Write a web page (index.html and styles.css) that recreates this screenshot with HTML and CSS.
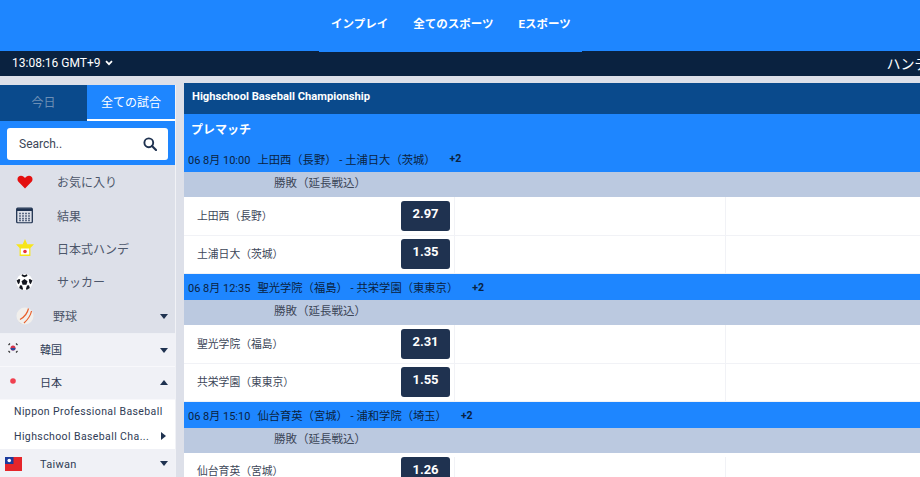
FILE: index.html
```html
<!DOCTYPE html>
<html lang="ja">
<head>
    <meta charset="UTF-8">
    <title>Highschool Baseball Championship</title>
    <link rel="stylesheet" href="styles.css">
</head>
<body>
    <nav class="top-nav">
        <div class="top-nav-links">
            <a>インプレイ</a>
            <a>全てのスポーツ</a>
            <a>Eスポーツ</a>
        </div>
    </nav>
    <div class="time-bar">
        <span class="clock">13:08:16 GMT+9</span>
        <svg class="clock-arrow" width="8" height="6" viewBox="0 0 8 6"><path d="M1 1.2l3 3 3-3" fill="none" stroke="#fff" stroke-width="1.7"/></svg>
        <span class="ticker">ハンデ</span>
    </div>

    <div class="layout">
        <aside class="sidebar">
            <div class="side-top">
                <div class="tabs">
                    <div class="tab">今日</div>
                    <div class="tab active">全ての試合</div>
                </div>
                <div class="search">
                    <span>Search..</span>
                    <svg width="14" height="14" viewBox="0 0 14 14"><circle cx="5.8" cy="5.8" r="4.4" fill="none" stroke="#1f3250" stroke-width="1.9"/><path d="M9 9l4 4" stroke="#1f3250" stroke-width="2.2" stroke-linecap="round"/></svg>
                </div>
            </div>

            <div class="menu-item">
                <svg class="menu-icon heart" width="16" height="14" viewBox="0 0 16 14"><path d="M8 13.5L1.2 6.6C-.6 3.6 1.2.7 4 .7c1.800 0 3.200 1 4 2.400C8.800 1.700 10.200.7 12 .7c2.800 0 4.600 2.900 2.800 5.900z" fill="#e41010"/></svg>
                <span>お気に入り</span>
            </div>
            <div class="menu-item">
                <svg class="menu-icon" width="17" height="17" viewBox="0 0 17 17"><rect x=".7" y="1.700" width="15.600" height="14.600" rx="1" fill="#dde0e9" stroke="#1f3250" stroke-width="1.300"/><path d="M1 2h15v2.500H1z" fill="#1f3250"/><path d="M3 7h11M3 9.500h11M3 12h11M3 14h11" stroke="#5d6b85" stroke-width="1.300" stroke-dasharray="2 1"/></svg>
                <span>結果</span>
            </div>
            <div class="menu-item">
                <svg class="menu-icon" width="18" height="18" viewBox="0 0 18 18"><path d="M9 0l2.300 5.300H18l-3.600 3.600V17H3.600V8.900L0 5.300h6.700z" fill="#f7e51a"/><rect x="4.800" y="9.500" width="8.400" height="6" fill="#fff"/><circle cx="9" cy="12.500" r="1.800" fill="#e8333f"/></svg>
                <span>日本式ハンデ</span>
            </div>
            <div class="menu-item">
                <svg class="menu-icon" width="17" height="17" viewBox="0 0 17 17"><circle cx="8.500" cy="8.500" r="8.200" fill="#fff"/><path d="M8.500 5.500l3 2.200-1.100 3.500H6.600L5.500 7.700zM6 .8l2.500 1 2.500-1 .4 1.700-2.900 1.200-2.900-1.200zM.6 7l2.400-1.600 1.200.7-.6 3.400-1.400 1.200zM16.400 7L14 5.400l-1.200.7.6 3.400 1.400 1.200zM3.200 14.500l.8-2.700 2 .2 1 3.300-.6 1.200zM13.800 14.500l-.8-2.700-2 .2-1 3.300.6 1.200z" fill="#14171f"/></svg>
                <span>サッカー</span>
            </div>
            <div class="menu-item sport">
                <svg class="menu-icon" width="18" height="18" viewBox="0 0 18 18"><circle cx="9" cy="9" r="8.500" fill="#f1efec"/><path d="M12.500 1.500C11.500 6 8.500 10 4 12.500M15.500 4C14.500 9 12 12.500 8 16" fill="none" stroke="#e8602c" stroke-width="1.200"/><path d="M1.500 13a8.500 8.500 0 0 0 7 4.500c-3-.5-5.500-2-7-4.500z" fill="#c9b89a"/></svg>
                <span>野球</span>
                <i class="caret down"></i>
            </div>

            <div class="country">
                <svg class="flag" width="10" height="10" viewBox="0 0 10 10"><circle cx="5" cy="5" r="2.500" fill="#d5324a"/><path d="M2.500 5a2.500 2.500 0 0 0 5 0z" fill="#2a4b9b"/><path d="M.5 2l1.500-1.500M8 .5L9.500 2M.5 8L2 9.500M8 9.500L9.500 8" stroke="#333" stroke-width="1.200"/></svg>
                <span>韓国</span>
                <i class="caret down"></i>
            </div>
            <div class="country">
                <svg class="flag" width="10" height="10" viewBox="0 0 10 10"><circle cx="5" cy="5" r="2.800" fill="#f0404f"/></svg>
                <span>日本</span>
                <i class="caret up"></i>
            </div>
            <div class="leagues">
                <div class="league">Nippon Professional Baseball</div>
                <div class="league">
                    <span>Highschool Baseball Cha...</span>
                    <i class="caret right"></i>
                </div>
            </div>
            <div class="country taiwan">
                <svg class="flag" width="17" height="14" viewBox="0 0 17 14"><rect width="17" height="14" fill="#e5252a"/><rect width="8.500" height="7" fill="#1b3a9c"/><circle cx="4.250" cy="3.500" r="1.800" fill="#fff"/></svg>
                <span>Taiwan</span>
                <i class="caret down"></i>
            </div>
        </aside>

        <main class="content">
            <div class="league-title">Highschool Baseball Championship</div>
            <div class="prematch">プレマッチ</div>

            <div class="match-head first">
                <span class="match-time">06 8月 10:00</span>
                <span class="match-name">上田西（長野） - 土浦日大（茨城）</span>
                <span class="more">+2</span>
            </div>
            <div class="market">勝敗（延長戦込）</div>
            <div class="row"><div class="team">上田西（長野）</div><div class="odds">2.97</div><div class="empty"></div></div>
            <div class="row"><div class="team">土浦日大（茨城）</div><div class="odds">1.35</div><div class="empty"></div></div>

            <div class="match-head">
                <span class="match-time">06 8月 12:35</span>
                <span class="match-name">聖光学院（福島） - 共栄学園（東東京）</span>
                <span class="more">+2</span>
            </div>
            <div class="market">勝敗（延長戦込）</div>
            <div class="row"><div class="team">聖光学院（福島）</div><div class="odds">2.31</div><div class="empty"></div></div>
            <div class="row"><div class="team">共栄学園（東東京）</div><div class="odds">1.55</div><div class="empty"></div></div>

            <div class="match-head">
                <span class="match-time">06 8月 15:10</span>
                <span class="match-name">仙台育英（宮城） - 浦和学院（埼玉）</span>
                <span class="more">+2</span>
            </div>
            <div class="market">勝敗（延長戦込）</div>
            <div class="row last"><div class="team">仙台育英（宮城）</div><div class="odds">1.26</div><div class="empty"></div></div>
        </main>
    </div>
</body>
</html>
```

FILE: styles.css
```css
* {
    box-sizing: border-box;
}
html, body {
    height: 100%;
}
body {
    margin: 0;
    overflow: hidden;
    background-color: #dde0e9;
    color: #3c4658;
    font-family: Roboto, "Noto Sans CJK JP", sans-serif;
    font-size: 12px;
}
.top-nav {
    height: 51px;
    background-color: #1e86ff;
    display: flex;
    padding-left: 319px;
}
.top-nav-links {
    width: 263px;
    height: 52px;
    padding: 15px 12px 0;
    display: flex;
    gap: 25px;
    background-color: #1e86ff;
    color: #fff;
    font-size: 11.500px;
    font-weight: 700;
    white-space: nowrap;
    position: relative;
}
.time-bar {
    height: 25px;
    padding: 0 0 2px 12px;
    display: flex;
    align-items: center;
    background-color: #0a2240;
    color: #fff;
    white-space: nowrap;
    overflow: hidden;
}
.clock-arrow {
    margin-left: 5px;
    flex: none;
}
.ticker {
    margin-left: 773px;
    font-size: 14px;
    flex: none;
}
.layout {
    display: flex;
    align-items: flex-start;
    margin-top: 7px;
}
.sidebar {
    width: 175px;
    flex: none;
    margin-top: 2px;
    margin-right: 9px;
    box-shadow: 1px 0 0 #f1f2f6;
}
.side-top {
    height: 80px;
    background-color: #1e86ff;
}
.tabs {
    display: flex;
    height: 36px;
}
.tab {
    width: 87px;
    text-align: center;
    line-height: 36px;
    background-color: #0a4a8c;
    color: #6d8fb5;
}
.tab.active {
    width: 88px;
    background-color: #1e86ff;
    color: #fff;
    border-bottom: 2px solid #fff;
}
.search {
    margin: 7px 7px 0;
    height: 32px;
    padding: 0 11px 0 12px;
    display: flex;
    justify-content: space-between;
    align-items: center;
    background-color: #fff;
    border-radius: 3px;
    color: #3c4658;
}
.menu-item {
    height: 33.400px;
    display: flex;
    align-items: center;
    padding-left: 57px;
    position: relative;
    color: #4c566a;
}
.menu-icon {
    position: absolute;
    left: 16px;
    top: 50%;
    transform: translateY(-50%);
}
.menu-icon.heart {
    left: 17px;
}
.menu-item.sport {
    padding-left: 53px;
    height: 35.400px;
    border-bottom: 1px solid #eef0f5;
}
.country {
    height: 33px;
    display: flex;
    align-items: center;
    padding: 0 0 2px 40px;
    position: relative;
    background-color: #f0f1f6;
    border-bottom: 1px solid #f8f8fb;
    color: #2f3c55;
    font-size: 11px;
}
.flag {
    position: absolute;
    left: 8px;
    top: 9px;
}
.taiwan {
    height: 28px;
    padding: 4px 0 0 40px;
    border-bottom: 0;
    letter-spacing: .3px;
}
.taiwan .flag {
    left: 5px;
    top: 8px;
}
.leagues {
    background-color: #fff;
    height: 49px;
}
.league {
    height: 24px;
    padding-left: 14px;
    display: flex;
    align-items: center;
    color: #2f3c55;
    font-size: 10.500px;
    letter-spacing: .4px;
    position: relative;
    white-space: nowrap;
}
.league + .league {
    height: 25px;
}
.caret {
    position: absolute;
    right: 7px;
    top: 50%;
    width: 0;
    height: 0;
    border-style: solid;
    border-color: transparent;
}
.caret.down {
    margin-top: -2px;
    border-width: 5px 4px 0;
    border-top-color: #1f3250;
}
.caret.up {
    margin-top: -3px;
    border-width: 0 4px 5px;
    border-bottom-color: #1f3250;
}
.caret.right {
    right: 9px;
    margin-top: -4px;
    border-width: 4px 0 4px 5px;
    border-left-color: #1f3250;
}
.content {
    flex: 1;
    min-width: 0;
    background-color: #fff;
    overflow: hidden;
}
.league-title {
    height: 31px;
    padding-left: 8px;
    line-height: 27px;
    background-color: #0a4a8c;
    color: #fff;
    font-weight: 700;
    font-size: 11.200px;
}
.prematch {
    height: 31px;
    padding: 6px 0 0 7px;
    background-color: #1e86ff;
    color: #fff;
    font-weight: 700;
}
.match-head {
    height: 26px;
    padding-left: 4px;
    display: flex;
    align-items: center;
    background-color: #1e86ff;
    color: #0a2240;
    white-space: nowrap;
}
.match-head.first {
    height: 27px;
}
.match-time {
    font-size: 11px;
    margin-right: 7px;
}
.match-name {
    font-size: 11.300px;
}
.more {
    margin-left: 14px;
    font-size: 10.500px;
    font-weight: 700;
}
.market {
    height: 25px;
    padding-left: 90px;
    line-height: 22px;
    background-color: #bbc9e0;
    color: #3c4658;
    font-size: 11.500px;
}
.row {
    height: 38.500px;
    display: flex;
    align-items: center;
    border-bottom: 1px solid #f1f2f6;
}
.row.last {
    height: 25px;
    align-items: flex-start;
    padding-top: 4px;
}
.team {
    width: 217px;
    padding: 0 0 2px 13px;
    font-size: 10.800px;
}
.row.last .team {
    padding-top: 5px;
}
.odds {
    width: 49px;
    height: 30px;
    line-height: 25px;
    text-align: center;
    border-radius: 3px;
    background-color: #1f3250;
    color: #fff;
    font-weight: 700;
    font-size: 13px;
}
.empty {
    width: 272px;
    height: 100%;
    margin-left: 4px;
    border-left: 1px solid #f1f2f6;
    border-right: 1px solid #f1f2f6;
}
```
